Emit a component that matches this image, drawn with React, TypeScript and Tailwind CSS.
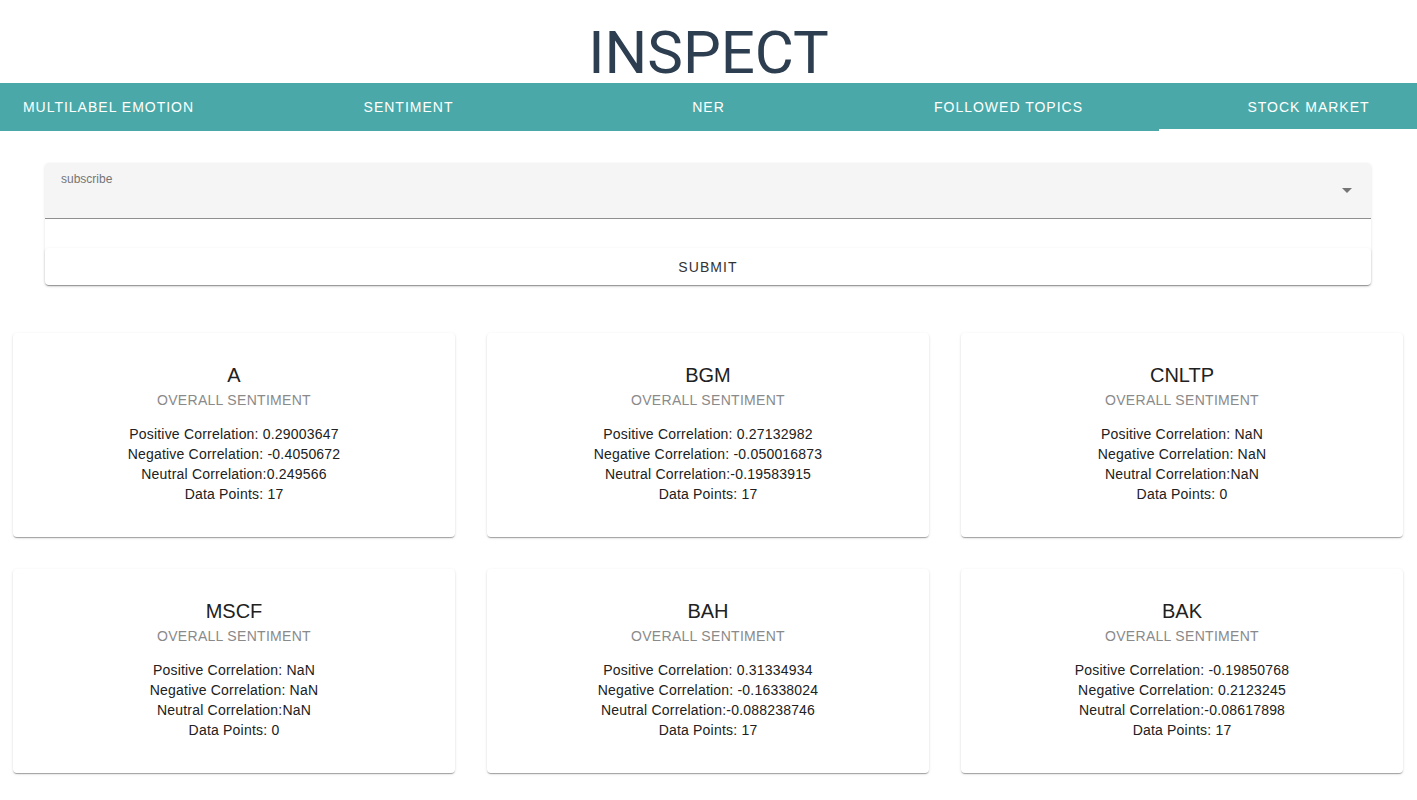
import React from "react";

const tabs = ["MULTILABEL EMOTION", "SENTIMENT", "NER", "FOLLOWED TOPICS", "STOCK MARKET"];

const cards = [
  { t: "A", p: "0.29003647", n: "-0.4050672", u: "0.249566", d: "17" },
  { t: "BGM", p: "0.27132982", n: "-0.050016873", u: "-0.19583915", d: "17" },
  { t: "CNLTP", p: "NaN", n: "NaN", u: "NaN", d: "0" },
  { t: "MSCF", p: "NaN", n: "NaN", u: "NaN", d: "0" },
  { t: "BAH", p: "0.31334934", n: "-0.16338024", u: "-0.088238746", d: "17" },
  { t: "BAK", p: "-0.19850768", n: "0.2123245", u: "-0.08617898", d: "17" },
];

export default function App() {
  return (
    <div className="min-h-[800px] bg-white font-[Liberation_Sans,Arial,sans-serif]">
      <header className="h-[83px] pt-[23px] text-center">
        <h1 className="font-[Roboto,sans-serif] text-[60px] leading-[60px] font-normal text-[#2c3e50]">INSPECT</h1>
      </header>

      <nav className="flex h-[48px] w-full justify-center overflow-hidden bg-[#4aa9a8]">
        {tabs.map((t, i) => (
          <div
            key={t}
            className="relative flex w-[300px] shrink-0 items-center justify-center text-[14px] font-normal tracking-[1px] text-white"
          >
            {t}
            {i === 4 && <span className="absolute bottom-0 left-0 right-0 h-[2px] bg-white" />}
          </div>
        ))}
      </nav>

      <div className="mx-[45px] mt-[32px] w-[1326px] rounded-[4px] shadow-[0_1px_3px_rgba(0,0,0,0.12)]">
        <div className="relative h-[56px] rounded-t-[4px] border-b border-[#8f8f8f] bg-[#f5f5f5]">
          <span className="absolute left-[16px] top-[9px] text-[12px] leading-[14px] text-[#757575]">subscribe</span>
          <svg
            className="absolute right-[12px] top-[15px]"
            width="24"
            height="24"
            viewBox="0 0 24 24"
            fill="#757575"
          >
            <path d="M7 10l5 5 5-5z" />
          </svg>
        </div>
        <div className="h-[29px]" />
        <button className="flex h-[37px] w-full items-center justify-center rounded-[4px] bg-white pt-[2px] text-[14px] font-normal tracking-[1.1px] text-[#333] shadow-[0_2px_1px_-1px_rgba(0,0,0,0.2),0_1px_1px_0_rgba(0,0,0,0.14),0_1px_3px_0_rgba(0,0,0,0.12)]">
          SUBMIT
        </button>
      </div>

      <div className="mt-[48px] grid grid-cols-3 gap-x-[32px] gap-y-[32px] pl-[13px] pr-[14px]">
        {cards.map((c) => (
          <div
            key={c.t}
            className="h-[204px] rounded-[4px] bg-white pt-[30px] text-center shadow-[0_2px_1px_-1px_rgba(0,0,0,0.2),0_1px_1px_0_rgba(0,0,0,0.14),0_1px_3px_0_rgba(0,0,0,0.12)]"
          >
            <div className="text-[20px] leading-[24px] text-[#212121]">{c.t}</div>
            <div className="mt-[3px] text-[14px] leading-[20px] tracking-[0.3px] text-[#8a8a8a]">OVERALL SENTIMENT</div>
            <div className="mt-[14px] text-[14px] leading-[20px] tracking-[0.2px] text-[#212121]">
              <div>Positive Correlation: {c.p}</div>
              <div>Negative Correlation: {c.n}</div>
              <div>Neutral Correlation:{c.u}</div>
              <div>Data Points: {c.d}</div>
            </div>
          </div>
        ))}
      </div>
    </div>
  );
}
